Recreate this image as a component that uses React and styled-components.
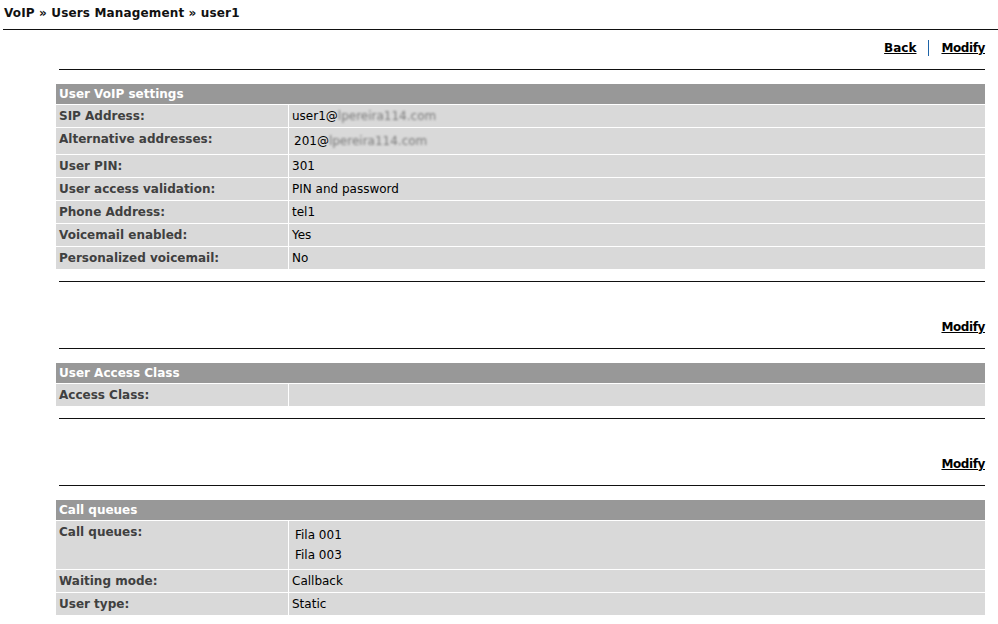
import React from "react";
import styled, { createGlobalStyle } from "styled-components";

const GlobalStyle = createGlobalStyle`
  html, body {
    margin: 0;
    padding: 0;
    background: #ffffff;
  }
  body {
    font-family: "DejaVu Sans", Verdana, sans-serif;
    font-size: 12px;
    color: #000;
  }
`;

const Page = styled.div`
  width: 998px;
  height: 624px;
  overflow: hidden;
`;

const Title = styled.h1`
  margin: 0;
  padding: 6px 0 0 4px;
  height: 29px;
  box-sizing: border-box;
  font-size: 12px;
  line-height: 14px;
  font-weight: bold;
  letter-spacing: 0.15px;
  color: #111;
`;

const TopRule = styled.div`
  margin-left: 3px;
  height: 1px;
  background: #111;
`;

const Content = styled.div`
  margin-left: 56px;
  width: 929px;
`;

const Section = styled.div`
  margin-top: ${(p) => p.$top}px;
`;

const ActionBar = styled.div`
  display: flex;
  justify-content: flex-end;
  align-items: center;
  height: 16px;
`;

const ActionLink = styled.a`
  font-weight: bold;
  color: #000;
  text-decoration: underline;
  line-height: 16px;
  letter-spacing: ${(p) => (p.$tight ? "-0.4px" : "0")};
  cursor: pointer;
`;

const Divider = styled.span`
  width: 1px;
  height: 16px;
  background: #1e64a8;
  margin: 0 12px;
`;

const Rule = styled.div`
  margin-left: 3px;
  height: 1px;
  background: #111;
  margin-top: ${(p) => p.$top}px;
`;

const Table = styled.table`
  width: 931px;
  margin-left: -1px;
  margin-top: 13px;
  border-collapse: separate;
  border-spacing: 1px;
  background: #fff;
`;

const HeadCell = styled.th`
  background: #989898;
  color: #fff;
  text-align: left;
  font-weight: bold;
  font-size: 12px;
  line-height: 14px;
  padding: 3px 3px;
  height: 14px;
`;

const LabelCell = styled.td`
  width: 226px;
  background: #d9d9d9;
  color: #404040;
  font-weight: bold;
  padding: 4px 3px;
  line-height: 14px;
  vertical-align: top;
`;

const ValueCell = styled.td`
  background: #d9d9d9;
  color: #000;
  padding: 4px 3px;
  line-height: 14px;
  vertical-align: top;
`;

const Padded = styled.div`
  padding: 2px 2px;
`;

const QueueItem = styled.div`
  padding: 3px 3px;
`;

const Blurred = styled.span`
  color: #7a7a7a;
  filter: blur(1.3px);
`;

const Domain = () => <Blurred>lpereira114.com</Blurred>;

const Row = ({ label, children }) => (
  <tr>
    <LabelCell>{label}</LabelCell>
    <ValueCell>{children}</ValueCell>
  </tr>
);

const App = () => {
  return (
    <Page>
      <GlobalStyle />
      <Title>VoIP » Users Management » user1</Title>
      <TopRule />
      <Content>
        <Section $top={10}>
          <ActionBar>
            <ActionLink>Back</ActionLink>
            <Divider />
            <ActionLink $tight>Modify</ActionLink>
          </ActionBar>
          <Rule $top={13} />
          <Table>
            <thead>
              <tr>
                <HeadCell colSpan={2}>User VoIP settings</HeadCell>
              </tr>
            </thead>
            <tbody>
              <Row label="SIP Address:">
                user1@<Domain />
              </Row>
              <Row label="Alternative addresses:">
                <Padded>
                  201@<Domain />
                </Padded>
              </Row>
              <Row label="User PIN:">301</Row>
              <Row label="User access validation:">PIN and password</Row>
              <Row label="Phone Address:">tel1</Row>
              <Row label="Voicemail enabled:">Yes</Row>
              <Row label="Personalized voicemail:">No</Row>
            </tbody>
          </Table>
          <Rule $top={11} />
        </Section>

        <Section $top={37}>
          <ActionBar>
            <ActionLink $tight>Modify</ActionLink>
          </ActionBar>
          <Rule $top={13} />
          <Table>
            <thead>
              <tr>
                <HeadCell colSpan={2}>User Access Class</HeadCell>
              </tr>
            </thead>
            <tbody>
              <Row label="Access Class:">{"\u00a0"}</Row>
            </tbody>
          </Table>
          <Rule $top={11} />
        </Section>

        <Section $top={37}>
          <ActionBar>
            <ActionLink $tight>Modify</ActionLink>
          </ActionBar>
          <Rule $top={13} />
          <Table>
            <thead>
              <tr>
                <HeadCell colSpan={2}>Call queues</HeadCell>
              </tr>
            </thead>
            <tbody>
              <Row label="Call queues:">
                <QueueItem>Fila 001</QueueItem>
                <QueueItem>Fila 003</QueueItem>
              </Row>
              <Row label="Waiting mode:">Callback</Row>
              <Row label="User type:">Static</Row>
            </tbody>
          </Table>
        </Section>
      </Content>
    </Page>
  );
};

export default App;
